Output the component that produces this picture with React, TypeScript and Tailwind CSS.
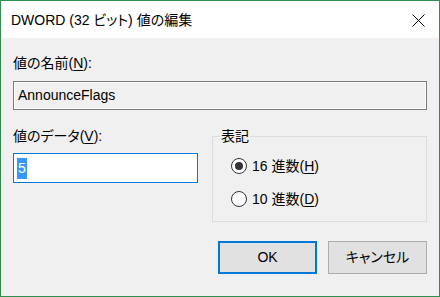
export default function App() {
  const font = "[font-family:'Liberation_Sans','Noto_Sans_CJK_JP',sans-serif] [font-feature-settings:'palt']";

  return (
    <div className={`w-[440px] h-[297px] border border-[#2f8f4f] bg-[#f0f0f0] flex flex-col text-[14px] text-black ${font}`}>
      {/* title bar */}
      <div className="h-[37px] bg-white flex items-center justify-between pl-[10px] pr-[14px]">
        <span className="leading-[20px] pt-[1px]">DWORD (32 ビット) 値の編集</span>
        <svg width="13" height="13" viewBox="0 0 13 13" className="mt-[1px]">
          <path d="M0.5 0.5 L12.5 12.5 M12.5 0.5 L0.5 12.5" stroke="#000" strokeWidth="1" />
        </svg>
      </div>

      <div className="flex flex-col px-[12px]">
        <div className="mt-[15px] h-[20px] leading-[20px]">
          値の名前(<span className="underline underline-offset-2">N</span>):
        </div>
        <div className="mt-[8px] h-[29px] border border-[#7a7a7a] bg-[#f0f0f0] shadow-[inset_0_0_0_1px_#ffffff] flex items-center pl-[4px]">
          AnnounceFlags
        </div>

        <div className="flex items-start mt-[16px]">
          {/* left column */}
          <div className="w-[185px] flex flex-col">
            <div className="h-[20px] leading-[20px]">
              値のデータ(<span className="underline underline-offset-2">V</span>):
            </div>
            <div className="mt-[7px] h-[30px] border border-[#0078d7] bg-white flex items-center pl-[3px]">
              <span className="bg-[#3399ff] text-white px-[1px] leading-[21px]">5</span>
            </div>
          </div>

          {/* group box */}
          <div className="relative ml-[14px] flex-1 mt-[10px] border border-[#dcdcdc] pt-[21px] pb-[14px] pl-[18px] flex flex-col gap-[17px]">
            <span className="absolute left-[7px] top-[-11px] bg-[#f0f0f0] px-[1px] leading-[20px]">表記</span>
            <div className="flex items-center h-[16px]">
              <span className="w-[16px] h-[16px] rounded-full border border-[#333] bg-white flex items-center justify-center">
                <span className="w-[8px] h-[8px] rounded-full bg-[#333]" />
              </span>
              <span className="ml-[5px] leading-[16px]">
                16 進数(<span className="underline underline-offset-2">H</span>)
              </span>
            </div>
            <div className="flex items-center h-[16px]">
              <span className="w-[16px] h-[16px] rounded-full border border-[#333] bg-white" />
              <span className="ml-[5px] leading-[16px]">
                10 進数(<span className="underline underline-offset-2">D</span>)
              </span>
            </div>
          </div>
        </div>

        {/* buttons */}
        <div className="flex justify-end gap-[11px] mt-[19px]">
          <button className="w-[99px] h-[33px] border-2 border-[#0078d7] bg-[#e1e1e1] flex items-center justify-center">
            OK
          </button>
          <button className="w-[99px] h-[33px] border border-[#adadad] bg-[#e1e1e1] flex items-center justify-center">
            キャンセル
          </button>
        </div>
      </div>
    </div>
  );
}
